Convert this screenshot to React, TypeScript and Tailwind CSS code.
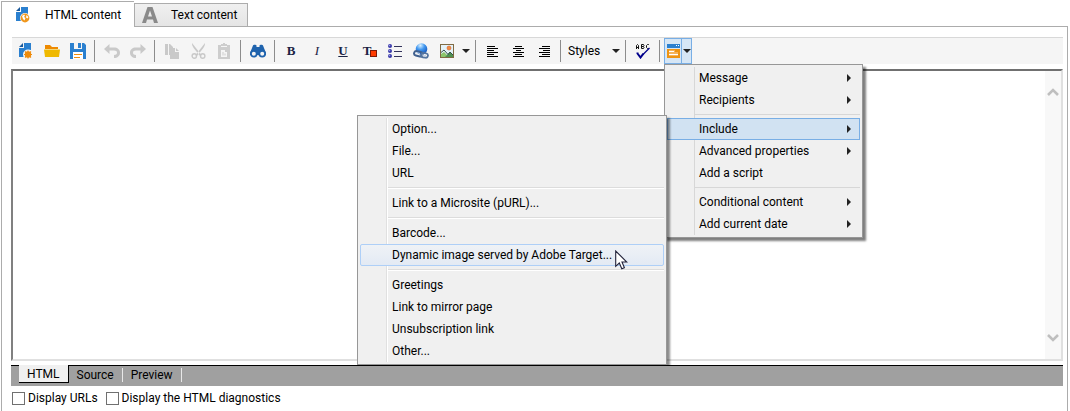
import React, { useState } from 'react';

type IconProps = { children: React.ReactNode; w?: number; h?: number };

function Icon({ children, w = 16, h = 16 }: IconProps) {
  return (
    <svg width={w} height={h} viewBox={`0 0 ${w} ${h}`} className="shrink-0" aria-hidden="true">
      {children}
    </svg>
  );
}

const PageWeb = () => (
  <Icon w={14} h={16}>
    <path d="M5 0h7v7H9l-4 7H0V5h5z" fill="#2b80cf" />
    <path d="M0 4l4-4v4z" fill="#1b5a9c" />
    <circle cx="9" cy="11" r="5" fill="#fff" />
    <circle cx="9" cy="11" r="4.400" fill="#f0971c" />
    <path d="M6 9l2-1.500 1 1-1 1.500 1.500 1-1 2.500L7 12zM10.500 8l2 2-1 1.500-1.500-1z" fill="#fff" />
  </Icon>
);

const NewDoc = () => (
  <Icon w={14} h={16}>
    <path d="M5 0h7v7H9l-4 7H0V5h5z" fill="#2b80cf" />
    <path d="M0 4l4-4v4z" fill="#1b5a9c" />
    <circle cx="9" cy="11.500" r="5" fill="#f5f5f5" />
    <circle cx="9" cy="11.500" r="3.200" fill="#ef8c0c" />
    <path d="M9 7.500v8M5 11.500h8M6 8.500l6 6M12 8.500l-6 6" stroke="#ef8c0c" strokeWidth="1.100" />
  </Icon>
);

const Folder = () => (
  <Icon>
    <path d="M1 6V2h5l2 2h6v2z" fill="#ee8a00" />
    <path d="M0 6.500h16l-1 7.500H1z" fill="#efb900" />
  </Icon>
);

const Save = () => (
  <Icon w={16} h={16}>
    <path d="M0 0h14l2 2v14H0z" fill="#2b80cf" />
    <path d="M4 0h8v6H4z" fill="#f5f5f5" />
    <path d="M8 0h3v5H8z" fill="#2b80cf" />
    <path d="M3 9h10v7H3z" fill="#fff" />
    <path d="M4 11h8v1H4zM4 14h6v1H4z" fill="#ef8c0c" />
  </Icon>
);

const UndoArrow = () => (
  <path d="M0 5l5.500-5v3.500H10c3.500 0 6 2 6 5.200S13.500 14 10 14v-3c1.800 0 3-.8 3-2.200S12 6.500 10 6.500H5.500V10z" fill="#c9c9c9" />
);
const Undo = () => (
  <Icon w={16} h={14}>
    <UndoArrow />
  </Icon>
);
const Redo = () => (
  <Icon w={16} h={14}>
    <g transform="matrix(-1 0 0 1 16 0)">
      <UndoArrow />
    </g>
  </Icon>
);

const Copy = () => (
  <Icon w={15} h={16}>
    <path d="M0 1h3v11H0zM4 1h1l3 3v1H6v7H4z" fill="#c9c9c9" />
    <path d="M5 5h5v4h4v7H5z" fill="#c9c9c9" />
    <path d="M11 5l3 3h-3z" fill="#c9c9c9" />
  </Icon>
);

const Cut = () => (
  <Icon w={15} h={16}>
    <path d="M1 0l9.500 12-1.500 1L3 5.500C1.500 3.500 1 2 1 0zM14 0L4.500 12 6 13l6-7.500C13.500 3.500 14 2 14 0z" fill="#c9c9c9" />
    <circle cx="3.300" cy="13" r="2.200" fill="none" stroke="#c9c9c9" strokeWidth="1.400" />
    <circle cx="11.700" cy="13" r="2.200" fill="none" stroke="#c9c9c9" strokeWidth="1.400" />
  </Icon>
);

const Paste = () => (
  <Icon w={12} h={16}>
    <path d="M0 2h3V1h2V0h2v1h2v1h3v14H0z" fill="#cdcdcd" />
    <path d="M3 3h6v1H3zM3 7h4v2h2v5H3z" fill="#f5f5f5" />
    <path d="M4.500 9h1v3.500h-1zM6.500 10.500h1v2h-1z" fill="#cdcdcd" />
  </Icon>
);

const Binoculars = () => (
  <Icon w={16} h={14}>
    <path d="M3 1.500C3 .5 6.500.5 6.500 1.500V3h3V1.500c0-1 3.500-1 3.500 0L16 9v2H0V9z" fill="#1f63ad" />
    <circle cx="3.800" cy="9.800" r="2.900" fill="#f5f5f5" stroke="#1f63ad" strokeWidth="1.800" />
    <circle cx="12.200" cy="9.800" r="2.900" fill="#f5f5f5" stroke="#1f63ad" strokeWidth="1.800" />
    <path d="M7 5h2v4H7z" fill="#1f63ad" />
  </Icon>
);

const Bullets = () => (
  <Icon w={14} h={14}>
    {[2, 7, 12].map((y) => (
      <g key={y}>
        <circle cx="2" cy={y} r="2" fill="#3a3aa8" />
        <circle cx="1.500" cy={y - 0.5} r=".8" fill="#9a9ae8" />
        <path d={`M6 ${y}h8v1H6z`} fill="#33335c" />
      </g>
    ))}
  </Icon>
);

const WebLink = () => (
  <Icon w={16} h={16}>
    <defs>
      <radialGradient id="globe" cx=".4" cy=".2" r=".8">
        <stop offset="0" stopColor="#d8f0ff" />
        <stop offset=".45" stopColor="#4298f0" />
        <stop offset="1" stopColor="#1452b8" />
      </radialGradient>
    </defs>
    <circle cx="8.500" cy="6" r="5.800" fill="url(#globe)" />
    <rect x="1" y="8.500" width="8.500" height="4.500" rx="2.200" transform="rotate(12 5 11)" fill="none" stroke="#40608e" strokeWidth="2" />
    <rect x="8" y="10" width="7" height="4.500" rx="2.200" transform="rotate(8 11 12)" fill="none" stroke="#54749f" strokeWidth="1.800" />
    <path d="M3 9.500l4 1M9 12l4 .6" stroke="#c5d5e8" strokeWidth="1" />
  </Icon>
);

const Picture = () => (
  <Icon w={14} h={14}>
    <rect x=".5" y=".5" width="13" height="13" fill="#e4f2f8" stroke="#806b43" />
    <circle cx="9" cy="4" r="2" fill="#f38b3f" stroke="#d5602c" strokeWidth=".6" />
    <path d="M1 10l3-2 5 5H1z" fill="#8cc56c" />
    <path d="M5 13l5-5 3 3v2z" fill="#4f9150" />
    <path d="M1 8.500L4 6l4 4.500L10 8l3 3" fill="none" stroke="#345148" />
  </Icon>
);

const ALIGN = {
  left: [[0, 8], [0, 11], [0, 7], [0, 11], [0, 7], [0, 11]],
  center: [[2, 7], [0, 11], [3, 5], [0, 11], [2, 7], [0, 11]],
  right: [[3, 8], [0, 11], [4, 7], [0, 11], [3, 8], [0, 11]],
};

function Align({ kind }: { kind: keyof typeof ALIGN }) {
  return (
    <Icon w={11} h={12}>
      {ALIGN[kind].map(([x, w], i) => (
        <rect key={i} x={x} y={i * 2 + 1} width={w} height="1" fill="#000" />
      ))}
    </Icon>
  );
}

const Down = () => (
  <Icon w={8} h={4}>
    <path d="M0 0h8L4 4z" fill="#222" />
  </Icon>
);

const FontColor = () => (
  <span className="relative pr-1 font-['Liberation_Serif',serif] text-[13px] font-bold leading-4 text-[#1b2344]">
    T
    <span className="absolute left-[7px] top-[7px] size-[7px] border border-[#7a1a0a] bg-[#ff3b00]" />
  </span>
);

const Spelling = () => (
  <Icon w={14} h={15}>
    <g fill="none" stroke="#111" strokeWidth="1">
      <path d="M.5 5V1.500L1.500.5 2.500 1.500V5M.5 3.500h2" />
      <path d="M5.500.5V4.500h2l.5-1-.5-1h-2M5.500.5h2l.5 1-.5 1" />
      <path d="M13 1l-.5-.5h-1L10.500 1.500v2l1 1h1L13 4" />
    </g>
    <path d="M4.500 13L13.500 4" fill="none" stroke="#00008b" strokeWidth="1.200" />
    <path d="M1.500 8.500v1l3 4 3-4" fill="none" stroke="#00008b" strokeWidth="2" />
  </Icon>
);

const Fields = () => (
  <Icon w={13} h={14}>
    <path d="M0 0h13v4H0z" fill="#2b80cf" />
    <path d="M9 1h1v1H9zM11 1h1v1h-1z" fill="#fff" />
    <path d="M0 5h13v9H0z" fill="#ee9412" />
    <path d="M2 6h6v2h3v4H2z" fill="#f5b45b" />
    <path d="M2 7h5v1H2zM2 10h9v1H2z" fill="#fff" />
  </Icon>
);

function Tool({ label, children }: { label: string; children: React.ReactNode }) {
  return (
    <button type="button" aria-label={label} className="flex h-full w-[26px] shrink-0 items-center justify-center">
      {children}
    </button>
  );
}

const Sep = () => <span className="mx-[3px] h-[22px] w-px shrink-0 bg-[#8c8c8c]" />;

type Entry = { label: string; arrow?: boolean } | null;

const FIELD_MENU: Entry[] = [
  { label: 'Message', arrow: true },
  { label: 'Recipients', arrow: true },
  null,
  { label: 'Include', arrow: true },
  { label: 'Advanced properties', arrow: true },
  { label: 'Add a script' },
  null,
  { label: 'Conditional content', arrow: true },
  { label: 'Add current date', arrow: true },
];

const INCLUDE_MENU: Entry[] = [
  { label: 'Option...' },
  { label: 'File...' },
  { label: 'URL' },
  null,
  { label: 'Link to a Microsite (pURL)...' },
  null,
  { label: 'Barcode...' },
  { label: 'Dynamic image served by Adobe Target...' },
  null,
  { label: 'Greetings' },
  { label: 'Link to mirror page' },
  { label: 'Unsubscription link' },
  { label: 'Other...' },
];

const Pointer = () => (
  <svg width="13" height="20" viewBox="0 0 13 20" className="pointer-events-none absolute left-[255px] top-[6px]" aria-hidden="true">
    <path d="M.7 1v15.300l3.600-3.300 2.500 5.800 2.600-1.100L7 12h4.800z" fill="#fff" stroke="#22223a" strokeWidth="1.100" />
  </svg>
);

function IncludeMenu() {
  return (
    <ul role="menu" className="absolute -top-[3px] right-full w-[310px] border border-[#979797] bg-[#f0f0f0] p-[2px] shadow-[3px_3px_2px_rgba(0,0,0,0.45)]">
      <li role="none" className="pointer-events-none absolute inset-y-[2px] left-[28px] w-[2px] border-l border-r border-l-[#e0e0e0] border-r-white" />
      {INCLUDE_MENU.map((item, i) => {
        if (!item) {
          return (
            <li key={i} role="separator" className="flex h-2 items-center pl-7">
              <span className="h-[2px] w-full border-b border-t border-b-white border-t-[#dcdcdc]" />
            </li>
          );
        }
        const hot = item.label.startsWith('Dynamic');
        return (
          <li key={i} role="none" className="relative">
            <button
              type="button"
              role="menuitem"
              className={
                'flex h-[22px] w-full items-center rounded-[2px] border pl-[31px] text-left ' +
                (hot ? 'border-[#aecff7] bg-linear-to-b from-[#eff2f6] to-[#e3eaf4]' : 'border-transparent')
              }
            >
              {item.label}
            </button>
            {hot && <Pointer />}
          </li>
        );
      })}
    </ul>
  );
}

function FieldMenu() {
  return (
    <ul role="menu" className="absolute -left-px top-full z-10 mt-px w-[199px] border border-[#979797] bg-[#f0f0f0] p-[2px] shadow-[3px_3px_2px_rgba(0,0,0,0.5)]">
      <li role="none" className="pointer-events-none absolute inset-y-[2px] left-[29px] w-px bg-[#d7d7d7]" />
      {FIELD_MENU.map((item, i) => {
        if (!item) {
          return (
            <li key={i} role="separator" className="flex h-[7px] items-center pl-[28px]">
              <span className="h-px w-full bg-[#d7d7d7]" />
            </li>
          );
        }
        const open = item.label === 'Include';
        return (
          <li key={i} role="none" className="relative">
            <button
              type="button"
              role="menuitem"
              aria-haspopup={item.arrow ? 'menu' : undefined}
              className={
                'flex h-[22px] w-full items-center justify-between border pl-[31px] pr-2 text-left ' +
                (open ? 'border-[#78aee5] bg-[#d1e2f2]' : 'border-transparent')
              }
            >
              {item.label}
              {item.arrow && (
                <Icon w={5} h={8}>
                  <path d="M1 0l4 4-4 4z" fill="#222" />
                </Icon>
              )}
            </button>
            {open && <IncludeMenu />}
          </li>
        );
      })}
    </ul>
  );
}

function Toolbar() {
  return (
    <div role="toolbar" className="ml-px flex h-[27px] items-center border-t border-[#d8d8d8] bg-[#f5f5f5] pl-px">
      <Tool label="New"><NewDoc /></Tool>
      <Tool label="Open"><Folder /></Tool>
      <Tool label="Save"><Save /></Tool>
      <Sep />
      <span className="w-px" />
      <Tool label="Undo"><Undo /></Tool>
      <Tool label="Redo"><Redo /></Tool>
      <Sep />
      <span className="w-px" />
      <Tool label="Copy"><Copy /></Tool>
      <Tool label="Cut"><Cut /></Tool>
      <Tool label="Paste"><Paste /></Tool>
      <Sep />
      <span className="w-px" />
      <Tool label="Find"><Binoculars /></Tool>
      <Sep />
      <Tool label="Bold">
        <span className="font-['Liberation_Serif',serif] text-[13px] font-bold leading-4 text-[#1b2344]">B</span>
      </Tool>
      <Tool label="Italic">
        <span className="font-['Liberation_Serif',serif] text-[13px] italic leading-4 text-[#1b2344]">I</span>
      </Tool>
      <Tool label="Underline">
        <span className="font-['Liberation_Serif',serif] text-[13px] font-bold leading-4 text-[#1b2344] underline">U</span>
      </Tool>
      <Tool label="Font colour"><FontColor /></Tool>
      <Tool label="Bulleted list"><Bullets /></Tool>
      <Tool label="Insert link"><WebLink /></Tool>
      <Tool label="Insert image"><Picture /></Tool>
      <button type="button" aria-label="Image options" className="flex h-full w-[11px] items-center justify-center"><Down /></button>
      <span className="w-px" />
      <Sep />
      <Tool label="Align left"><Align kind="left" /></Tool>
      <Tool label="Align centre"><Align kind="center" /></Tool>
      <Tool label="Align right"><Align kind="right" /></Tool>
      <Sep />
      <div className="relative flex h-full w-[58px] items-center">
        <select aria-label="Styles" className="w-full appearance-none bg-transparent pl-1">
          <option>Styles</option>
        </select>
        <span className="pointer-events-none absolute right-[2px]"><Down /></span>
      </div>
      <Sep />
      <span className="w-px" />
      <Tool label="Check spelling"><Spelling /></Tool>
      <Sep />
      <div className="relative ml-px flex h-[26px] border border-[#78aee5] bg-[#d6e6f5]">
        <button type="button" aria-label="Insert field" className="flex w-[17px] items-center justify-center border-r border-[#78aee5]"><Fields /></button>
        <button type="button" aria-label="Field menu" aria-expanded="true" className="flex w-[9px] items-center justify-center"><Down /></button>
        <FieldMenu />
      </div>
    </div>
  );
}

const Chevron = ({ up = false }: { up?: boolean }) => (
  <Icon w={12} h={9}>
    <path d={up ? 'M1 8l5-5 5 5' : 'M1 1l5 5 5-5'} fill="none" stroke="#bfbfbf" strokeWidth="2.600" />
  </Icon>
);

function Check({ label, checked, onChange }: { label: string; checked: boolean; onChange: () => void }) {
  return (
    <label className="flex items-center gap-[3px]">
      <input
        type="checkbox"
        checked={checked}
        onChange={onChange}
        className="size-[13px] appearance-none border border-[#707070] bg-white checked:bg-[#2b80cf]"
      />
      {label}
    </label>
  );
}

export default function App() {
  const [urls, setUrls] = useState(false);
  const [diag, setDiag] = useState(false);
  return (
    <div className="flex min-h-screen flex-col bg-white pl-px pr-[2px] pt-px font-['Roboto','Open_Sans',sans-serif] text-[12px] leading-4 text-black">
      <div role="tablist" className="flex h-[25px] items-end">
        <button type="button" role="tab" aria-selected="true" className="flex h-full w-[133px] items-center gap-[15px] border-l border-t border-[#acacac] bg-white pl-[14px] pt-px">
          <PageWeb />
          HTML content
        </button>
        <button type="button" role="tab" aria-selected="false" className="flex h-[23px] w-[114px] items-center gap-[13px] border-l border-r border-t border-[#acacac] bg-linear-to-b from-[#f0f0f0] to-[#e5e5e5] pl-[7px]">
          <Icon w={16} h={16}>
            <path d="M5.500 0h5L16 16h-4l-1-3.500H5L4 16H0zM8 3.500L6 9.500h4z" fill="#8a8a8a" fillRule="evenodd" />
          </Icon>
          Text content
        </button>
        <span className="flex-1" />
      </div>
      <div className="flex">
        <span className="h-px w-[133px] border-l border-[#acacac]" />
        <span className="h-px flex-1 bg-[#acacac]" />
      </div>
      <div role="tabpanel" className="flex flex-1 flex-col border-l border-r border-[#acacac] pb-[5px] pl-[9px] pr-1 pt-[10px]">
        <Toolbar />
        <div className="mt-[5px] flex flex-1 border-2 border-b-[#e0e0e0] border-l-[#808080] border-r-[#e0e0e0] border-t-[#707070]">
          <div role="textbox" aria-label="HTML editor" aria-multiline="true" contentEditable suppressContentEditableWarning className="flex-1 outline-none" />
          <div className="flex w-4 flex-col items-center justify-between bg-[#f8f8f8] py-4">
            <Chevron up />
            <Chevron />
          </div>
        </div>
        <div role="tablist" className="relative z-20 mt-1 flex h-[21px] items-start border-t border-black bg-[#a0a0a0] pl-2">
          <button type="button" role="tab" aria-selected="true" className="-mt-px h-[18px] border-b border-r border-black bg-[#f0f0f0] px-2">HTML</button>
          <button type="button" role="tab" aria-selected="false" className="h-[18px] px-2">Source</button>
          <span className="mt-[2px] h-[14px] w-px bg-[#e8e8e8]" />
          <button type="button" role="tab" aria-selected="false" className="h-[18px] px-2">Preview</button>
          <span className="mt-[2px] h-[14px] w-px bg-[#e8e8e8]" />
        </div>
        <div className="ml-px mt-1 flex gap-2">
          <Check label="Display URLs" checked={urls} onChange={() => setUrls(!urls)} />
          <Check label="Display the HTML diagnostics" checked={diag} onChange={() => setDiag(!diag)} />
        </div>
      </div>
    </div>
  );
}
